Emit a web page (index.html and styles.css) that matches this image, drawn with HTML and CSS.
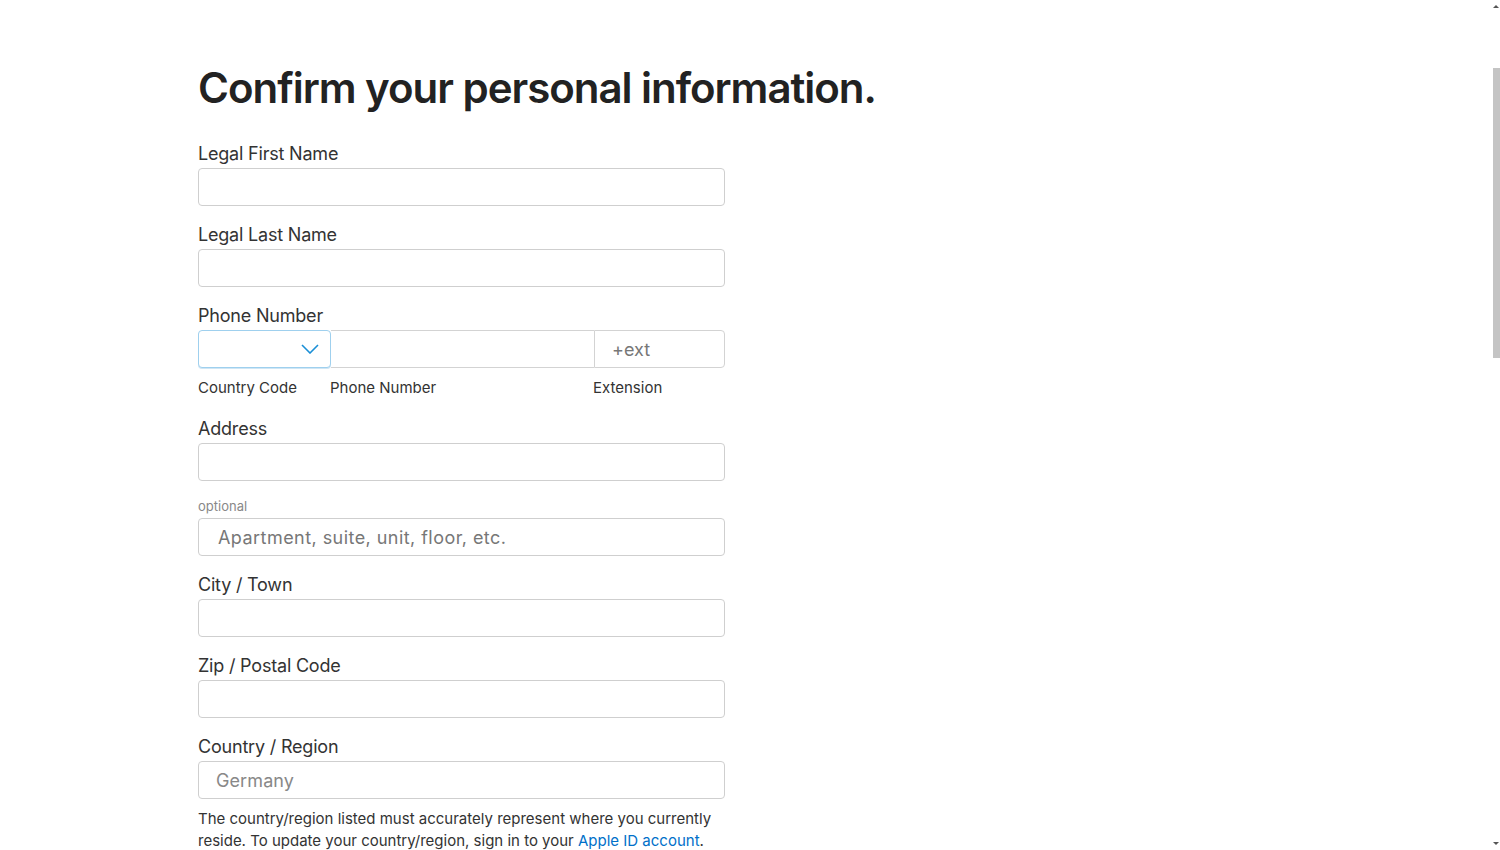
FILE: index.html
```html
<!DOCTYPE html>
<html lang="en">
<head>
<meta charset="utf-8">
<title>Confirm your personal information</title>
<link rel="stylesheet" href="styles.css">
</head>
<body>
<main class="page">
  <h1 class="title">Confirm your personal information.</h1>
  <form class="form">
    <div class="field">
      <label class="label">Legal First Name</label>
      <div class="input"></div>
    </div>
    <div class="field">
      <label class="label">Legal Last Name</label>
      <div class="input"></div>
    </div>
    <div class="field">
      <label class="label">Phone Number</label>
      <div class="phone">
        <div class="ph ph-code">
          <svg class="chev" width="18" height="10" viewBox="0 0 18 10"><path d="M1 1 L9 9 L17 1" fill="none" stroke="#1a8fd6" stroke-width="1.6"/></svg>
        </div>
        <div class="ph ph-num"></div>
        <div class="ph ph-ext"><span class="ph-text">+ext</span></div>
      </div>
      <div class="sublabels">
        <span class="sl sl-code">Country Code</span>
        <span class="sl sl-num">Phone Number</span>
        <span class="sl sl-ext">Extension</span>
      </div>
    </div>
    <div class="field field-address">
      <label class="label">Address</label>
      <div class="input"></div>
    </div>
    <div class="field field-opt">
      <label class="label-small">optional</label>
      <div class="input"><span class="placeholder placeholder-apt">Apartment, suite, unit, floor, etc.</span></div>
    </div>
    <div class="field">
      <label class="label">City / Town</label>
      <div class="input"></div>
    </div>
    <div class="field">
      <label class="label">Zip / Postal Code</label>
      <div class="input"></div>
    </div>
    <div class="field">
      <label class="label">Country / Region</label>
      <div class="input"><span class="placeholder placeholder-country">Germany</span></div>
      <p class="note">The country/region listed must accurately represent where you currently reside. To update your country/region, sign in to your <a class="link" href="#">Apple ID account</a>.</p>
    </div>
  </form>
</main>
<div class="scrollbar">
  <span class="sb-arrow sb-up"></span>
  <span class="sb-thumb"></span>
  <span class="sb-arrow sb-down"></span>
</div>
</body>
</html>
```

FILE: styles.css
```css
* { box-sizing: border-box; }
html, body { margin: 0; padding: 0; background: #fff; }
body {
  font-family: Inter, "Noto Sans", "Liberation Sans", sans-serif;
  color: #1d1d1f;
  height: 850px;
  overflow: hidden;
}
.page {
  padding: 60px 0 0 198px;
  width: 1100px;
}
.title {
  margin: 0;
  font-size: 42px;
  font-weight: 600;
  letter-spacing: -1.02px;
  line-height: 56px;
  color: #222;
}
.form {
  width: 527px;
  margin-top: 24px;
  display: flex;
  flex-direction: column;
}
.field { display: flex; flex-direction: column; margin-bottom: 3px; }
.label {
  font-size: 18px;
  line-height: 24px;
  color: #333;
  letter-spacing: -0.2px;
  padding-top: 2px;
  margin-bottom: 2px;
}
.input {
  height: 38px;
  border: 1px solid #cfcfcf;
  border-radius: 4px;
  background: #fff;
  display: flex;
  align-items: center;
  margin-bottom: 12px;
}
.placeholder {
  padding-left: 19px;
  font-size: 18px;
  color: #777;
  letter-spacing: 0.1px;
}
.placeholder-apt { letter-spacing: 0.45px; }
.placeholder-country { padding-left: 17px; color: #888; }
.phone { display: flex; height: 38px; }
.ph {
  height: 38px;
  border: 1px solid #d3d3d3;
  background: #fff;
  display: flex;
  align-items: center;
}
.ph-code {
  width: 133px;
  border-color: #9fd0ee;
  border-radius: 4px;
  justify-content: flex-end;
  padding-right: 11px;
  box-shadow: 0 1px 0 #cfe6f5;
}
.ph-num { width: 263px; border-left: none; border-right: none; }
.ph-ext {
  width: 131px;
  border-radius: 0 4px 4px 0;
  padding-left: 17px;
}
.ph-text { font-size: 18px; color: #777; }
.sublabels {
  display: flex;
  font-size: 15px;
  color: #333;
  line-height: 20px;
  margin-top: 10px;
  margin-bottom: 14px;
}
.sl-code { width: 132px; }
.sl-num { width: 263px; }
.field-address .input { margin-bottom: 14px; }
.label-small {
  font-size: 13px;
  color: #888;
  line-height: 16px;
  margin-bottom: 4px;
}
.note {
  margin: -3px 0 0;
  font-size: 15px;
  line-height: 22px;
  color: #333;
}
.link { color: #0070c9; text-decoration: none; }
.scrollbar {
  position: fixed;
  top: 0;
  right: 0;
  width: 8px;
  height: 850px;
}
.sb-thumb {
  position: absolute;
  top: 68px;
  left: 1px;
  width: 7px;
  height: 290px;
  background: #c4c4c4;
}
.sb-arrow {
  position: absolute;
  left: 1px;
  width: 0;
  height: 0;
  border-left: 3px solid transparent;
  border-right: 3px solid transparent;
}
.sb-up { top: 5px; border-bottom: 3px solid #555; }
.sb-down { bottom: 5px; border-top: 3px solid #555; }
```
